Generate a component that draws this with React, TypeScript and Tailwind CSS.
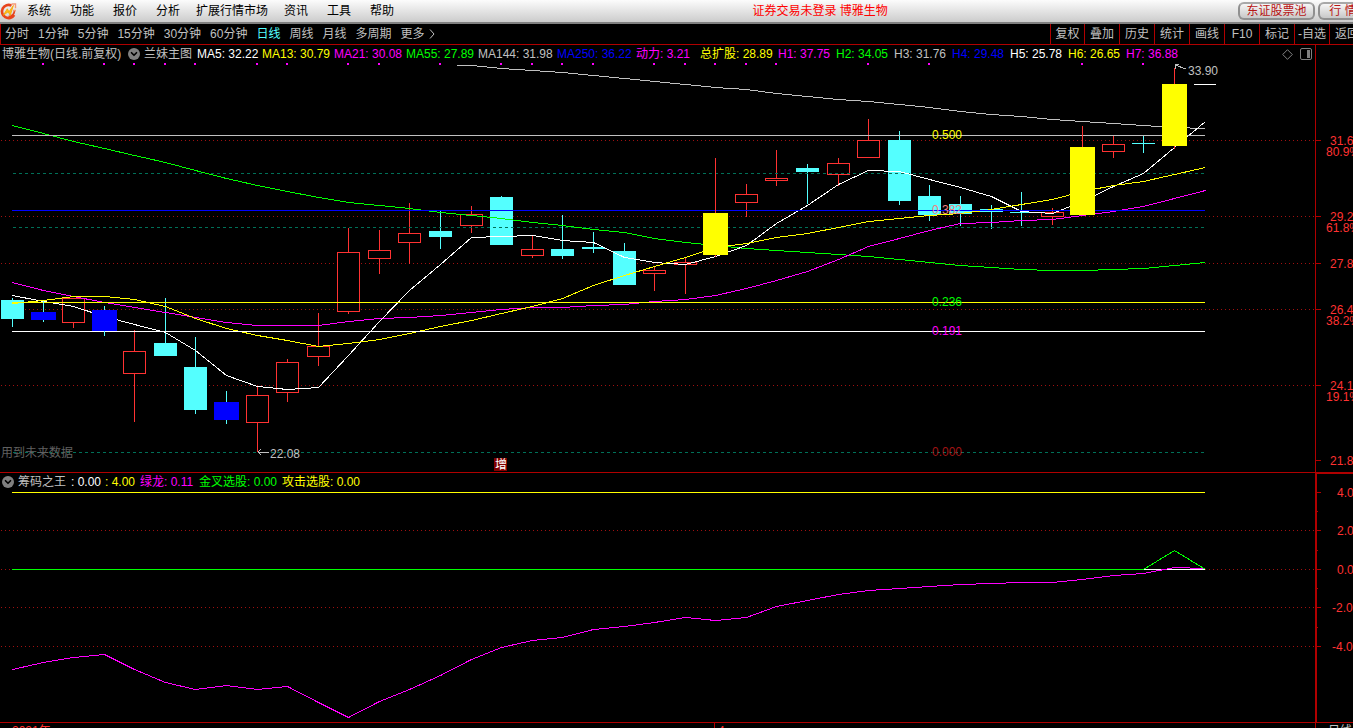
import { ChevronDown } from "lucide-react";

const STEP = 30.58;
const xAt = (i: number) => Math.floor(12.44 + i * STEP);

type Kind = "up" | "down" | "blue" | "yellow";

// high, body top, body bottom, low
const candles: [Kind, number, number, number, number][] = [
  ["down", 298, 300, 319, 327],
  ["blue", 301, 312, 320, 322],
  ["up", 298, 298, 323, 328],
  ["blue", 306, 310, 331, 336],
  ["up", 330, 351, 374, 422],
  ["down", 298, 343, 356, 356],
  ["down", 337, 367, 410, 414],
  ["blue", 391, 402, 420, 424],
  ["up", 386, 395, 423, 452],
  ["up", 359, 362, 393, 402],
  ["up", 313, 346, 357, 366],
  ["up", 228, 252, 312, 314],
  ["up", 230, 250, 259, 274],
  ["up", 203, 233, 243, 264],
  ["down", 211, 231, 237, 249],
  ["up", 206, 214, 226, 233],
  ["down", 196, 197, 245, 245],
  ["up", 236, 249, 256, 258],
  ["down", 215, 249, 256, 259],
  ["down", 232, 247, 249, 253],
  ["down", 243, 251, 285, 285],
  ["up", 267, 270, 274, 291],
  ["up", 258, 262, 265, 294],
  ["yellow", 158, 213, 255, 257],
  ["up", 184, 194, 203, 217],
  ["up", 150, 178, 181, 186],
  ["down", 164, 168, 172, 204],
  ["up", 158, 163, 175, 186],
  ["up", 119, 140, 158, 158],
  ["down", 131, 140, 201, 205],
  ["down", 185, 196, 215, 221],
  ["down", 196, 204, 214, 226],
  ["down", 205, 209, 212, 229],
  ["down", 192, 212, 213, 226],
  ["up", 208, 212, 217, 225],
  ["yellow", 126, 147, 215, 215],
  ["up", 136, 144, 152, 158],
  ["down", 136, 143, 144, 153],
  ["yellow", 68, 84, 146, 149],
];

const ma5 = [295, 301, 306, 316, 324, 332, 350, 375, 386, 389, 387, 355, 321, 290, 264, 237, 236, 235, 240, 242, 257, 262, 264, 256, 245, 223, 205, 184, 170, 171, 179, 187, 196, 211, 213, 201, 186, 173, 147, 121];
const ma13 = [303, 300, 296, 296, 299, 306, 318, 328, 335, 340, 346, 343, 339, 333, 326, 320, 313, 306, 298, 285, 275, 266, 257, 247, 243, 237, 233, 227, 221, 218, 215, 213, 209, 204, 199, 191, 185, 181, 174, 167];
const ma21 = [282, 290, 296, 302, 307, 312, 317, 322, 325, 325, 325, 321, 318, 317, 315, 312, 309, 307, 307, 305, 304, 301, 299, 295, 288, 280, 271, 259, 246, 238, 230, 223, 222, 220, 219, 215, 211, 206, 198, 190];
const ma55 = [125, 133, 141, 148, 155, 162, 170, 178, 185, 191, 197, 202, 205, 208, 212, 215, 218, 222, 225, 229, 232, 238, 242, 245, 248, 250, 252, 254, 256, 259, 262, 265, 267, 269, 270, 270, 269, 268, 265, 262];
const ma144 = [65, 68, 70, 72, 75, 78, 81, 84, 87, 89, 93, 96, 99, 101, 104, 107, 111, 114, 116, 119, 121, 123, 125, 127, 128];
const power = [669, 662, 657, 654, 669, 682, 689, 685, 689, 686, 702, 717, 701, 689, 675, 659, 647, 640, 637, 629, 626, 622, 617, 620, 617, 606, 600, 594, 590, 588, 586, 584, 583, 582, 582, 579, 575, 573, 567, 568];

const dots = [1, 3, 4, 5, 6, 8, 9, 11, 12, 14, 16, 17, 18, 19, 21, 22, 23, 24, 25, 28, 30, 35, 37];

const menu = ["系统", "功能", "报价", "分析", "扩展行情市场", "资讯", "工具", "帮助"];
const periods = ["分时", "1分钟", "5分钟", "15分钟", "30分钟", "60分钟", "日线", "周线", "月线", "多周期"];
const tools = ["复权", "叠加", "历史", "统计", "画线", "F10", "标记", "-自选", "返回"];

const legend = [
  { text: "MA5: 32.22", cls: "w-[65px] text-white" },
  { text: "MA13: 30.79", cls: "w-[72px] text-[#ffff00]" },
  { text: "MA21: 30.08", cls: "w-[72px] text-[#ff00ff]" },
  { text: "MA55: 27.89", cls: "w-[72px] text-[#00ff00]" },
  { text: "MA144: 31.98", cls: "w-[79px] text-[#c0c0c0]" },
  { text: "MA250: 36.22", cls: "w-[79px] text-[#0000ff]" },
  { text: "动力: 3.21", cls: "w-[64px] text-[#ff00ff]" },
  { text: "总扩股: 28.89", cls: "w-[78px] text-[#ffff00]" },
  { text: "H1: 37.75", cls: "w-[58px] text-[#ff00ff]" },
  { text: "H2: 34.05", cls: "w-[58px] text-[#00ff00]" },
  { text: "H3: 31.76", cls: "w-[58px] text-[#c0c0c0]" },
  { text: "H4: 29.48", cls: "w-[58px] text-[#0000ff]" },
  { text: "H5: 25.78", cls: "w-[58px] text-white" },
  { text: "H6: 26.65", cls: "w-[58px] text-[#ffff00]" },
  { text: "H7: 36.88", cls: "w-[58px] text-[#ff00ff]" },
];

const levels = [
  { y: 135, color: "#c0c0c0" },
  { y: 210, color: "#0000ff" },
  { y: 302, color: "#ffff00" },
  { y: 331, color: "#ffffff" },
];

function Logo() {
  return (
    <svg viewBox="0 0 18 18" className="h-[18px] w-[18px] shrink-0">
      <path d="M11.5 3.6A6.6 6.6 0 1 0 14.2 13" fill="none" stroke="#e8441c" strokeWidth="2.6" />
      <path d="M8.5 14.6c3.6-.4 5.6-2.6 6-5.6" fill="none" stroke="#e8441c" strokeWidth="1.8" />
      <path d="M11.5 2h4v4.3M16 8.5h-3" fill="none" stroke="#f49a7a" strokeWidth="1.4" />
      <path d="M3.4 13.2 7.3 6.8 9 9.8 13.4 3.4 10.2 13.4 8.2 9.8z" fill="#ffc21a" stroke="#f5a300" strokeWidth=".8" />
    </svg>
  );
}

function Toggle({ label }: { label: string }) {
  return (
    <button aria-label={label} className="flex h-3 w-3 shrink-0 items-center justify-center rounded-full bg-[#808080] text-black">
      <ChevronDown className="h-2.5 w-2.5" strokeWidth={4} />
    </button>
  );
}

function Polyline({ data, color, from = 0 }: { data: number[]; color: string; from?: number }) {
  const points = data.map((y, i) => `${xAt(i + from)},${y}`).join(" ");
  return <polyline points={points} fill="none" stroke={color} />;
}

function Candle({ index, candle }: { index: number; candle: (typeof candles)[number] }) {
  const [kind, high, top, bottom, low] = candle;
  const x = xAt(index);
  const wick = kind === "up" || kind === "yellow" ? "#ff3232" : "#54ffff";
  const height = bottom - top;
  return (
    <g>
      <rect x={x} y={high} width={1} height={low - high} fill={wick} />
      {kind === "up" && (
        <>
          <rect x={x - 11} y={top} width={23} height={height} fill="#ff3232" />
          <rect x={x - 10} y={top + 1} width={21} height={height - 2} fill="#000" />
        </>
      )}
      {kind === "down" && <rect x={x - 11} y={top} width={23} height={height} fill="#54ffff" />}
      {kind === "blue" && <rect x={x - 12} y={top} width={25} height={height} fill="#0000ff" />}
      {kind === "yellow" && <rect x={x - 12} y={top} width={25} height={height} fill="#ffff00" />}
    </g>
  );
}

function GridLines({ rows }: { rows: number[] }) {
  return (
    <g transform="translate(0 .5)">
      {rows.map((y) => (
        <line key={y} x1={1} x2="100%" y1={y} y2={y} stroke="#a01010" strokeDasharray="1 3" />
      ))}
    </g>
  );
}

function PriceChart() {
  const special = (k: Kind) => k === "blue" || k === "yellow";
  return (
    <svg className="block h-[409px] w-full text-xs" shapeRendering="crispEdges">
      <g transform="translate(0 -63)">
        <GridLines rows={[140, 216, 263, 309, 385]} />
        {dots.map((i) => (
          <rect key={i} x={xAt(i) - 1} y={63} width={2} height={2} fill="#ff00ff" />
        ))}
        {candles.map((c, i) => !special(c[0]) && <Candle key={i} index={i} candle={c} />)}
        <g transform="translate(.5 .5)">
          {[173, 227, 452].map((y) => (
            <line key={y} x1={12} x2={1204} y1={y} y2={y} stroke="#007058" strokeDasharray="3 3" />
          ))}
          <line x1={456} x2={472} y1={65} y2={65} stroke="#c0c0c0" />
          <Polyline data={ma144} color="#c0c0c0" from={15} />
          <Polyline data={ma55} color="#00ff00" />
          <Polyline data={ma21} color="#ff00ff" />
          <Polyline data={ma5} color="#ffffff" />
          <Polyline data={ma13} color="#ffff00" />
        </g>
        {levels.map((l) => (
          <rect key={l.y} x={12} y={l.y} width={1193} height={1} fill={l.color} />
        ))}
        {candles.map((c, i) => special(c[0]) && <Candle key={i} index={i} candle={c} />)}
        <rect x={1194} y={84} width={22} height={1} fill="#fff" />

        <text x={932} y={139} fill="#ffff00">0.500</text>
        <text x={932} y={214} fill="#f08080">0.382</text>
        <text x={932} y={306} fill="#00ff00">0.236</text>
        <text x={932} y={335} fill="#ff00ff">0.191</text>
        <text x={932} y={456} fill="#a01414">0.000</text>

        <path d="M1186 69l-11-4m4-1h-4v5" fill="none" stroke="#c0c0c0" />
        <text x={1188} y={75} fill="#c0c0c0">33.90</text>
        <path d="M269 452h-11m3-3l-3 3 3 3" fill="none" stroke="#c0c0c0" />
        <text x={270} y={458} fill="#c0c0c0">22.08</text>
        <text x={1} y={457} fill="#606060">用到未来数据</text>
        <rect x={494} y={458} width={13} height={13} fill="#800000" />
        <text x={495} y={469} fill="#fff">增</text>
      </g>
    </svg>
  );
}

function PriceAxis() {
  const labels = [
    { y: 140, price: "31.6", pct: "80.9%" },
    { y: 216, price: "29.2", pct: "61.8%" },
    { y: 263, price: "27.8" },
    { y: 309, price: "26.4", pct: "38.2%" },
    { y: 385, price: "24.1", pct: "19.1%" },
    { y: 460, price: "21.8" },
  ];
  return (
    <div className="w-[38px] shrink-0 overflow-hidden border-l border-[#b00000]">
      <svg className="block h-full w-full text-xs" fill="#ff3232">
        <g transform="translate(0 -45)">
          {labels.map((l) => (
            <g key={l.y}>
              <rect y={l.y} width={5} height={1} fill="#b00000" />
              <text x={14} y={l.y + 5}>{l.price}</text>
              {l.pct && <text x={10} y={l.y + 16}>{l.pct}</text>}
            </g>
          ))}
        </g>
      </svg>
    </div>
  );
}

function IndicatorChart() {
  return (
    <svg className="block h-[231px] w-full" shapeRendering="crispEdges">
      <g transform="translate(0 -491)">
        <GridLines rows={[530, 569, 607, 646]} />
        <rect x={12} y={492} width={1193} height={1} fill="#ffff00" />
        <rect x={1144} y={569} width={61} height={1} fill="#fff" />
        <rect x={12} y={569} width={1132} height={1} fill="#00ff00" />
        <g transform="translate(.5 .5)">
          <Polyline data={power} color="#ff00ff" />
          <Polyline data={[569, 550, 569]} color="#00ff00" from={37} />
        </g>
      </g>
    </svg>
  );
}

function IndicatorAxis() {
  const labels = [
    { y: 492, text: "4.0", x: 20 },
    { y: 530, text: "2.0", x: 20 },
    { y: 569, text: "0.0", x: 20 },
    { y: 607, text: "-2.0", x: 15 },
    { y: 646, text: "-4.0", x: 15 },
  ];
  return (
    <div className="w-[38px] shrink-0 overflow-hidden border-y border-l-2 border-[#b00000]">
      <svg className="block h-full w-full text-xs" fill="#ff3232">
        <g transform="translate(0 -474)">
          {labels.map((l) => (
            <g key={l.y}>
              <rect y={l.y} width={4} height={1} fill="#b00000" />
              <text x={l.x} y={l.y + 5}>{l.text}</text>
            </g>
          ))}
          {[511, 550, 588, 627].map((y) => (
            <rect key={y} y={y} width={1} height={1} fill="#b00000" />
          ))}
        </g>
      </svg>
    </div>
  );
}

export default function App() {
  return (
    <div className="flex h-screen flex-col overflow-hidden bg-black font-['Liberation_Sans','Noto_Sans_CJK_SC',sans-serif] text-xs whitespace-nowrap text-[#c0c0c0]">
      <header className="flex h-6 shrink-0 items-center border-b-2 border-[#808080] bg-linear-to-b from-[#fcfcfc] to-[#cccccc] text-black">
        <Logo />
        <nav className="ml-[9px] flex gap-[19px]">
          {menu.map((m) => (
            <button key={m} className={m.length > 2 ? "-mx-[3px]" : ""}>
              {m}
            </button>
          ))}
        </nav>
        <div className="flex-1 pl-2 text-center text-[#ff0000]">证券交易未登录 博雅生物</div>
        <div className="flex w-[115px] shrink-0 gap-[3px] overflow-hidden text-[#b81414]">
          <button className="h-[18px] w-[77px] shrink-0 rounded-md border-2 border-[#909090] border-t-[#a8a8a8] bg-linear-to-b from-[#f6f6f6] to-[#c8c8c8] leading-3">
            东证股票池
          </button>
          <button className="h-[18px] w-[50px] shrink-0 rounded-md border-2 border-[#909090] border-t-[#a8a8a8] bg-linear-to-b from-[#f6f6f6] to-[#c8c8c8] leading-3">
            行 情
          </button>
        </div>
      </header>

      <div className="flex h-[21px] shrink-0 border-b border-l border-[#b00000]">
        <nav className="flex min-w-0 flex-1 items-center gap-[9px] overflow-hidden pl-1">
          {periods.map((p) => (
            <button key={p} className={p === "日线" ? "text-[#54ffff]" : ""}>
              {p}
            </button>
          ))}
          <button className="flex items-center gap-1">
            更多
            <svg viewBox="0 0 6 10" className="h-2.5 w-1.5" fill="none" stroke="currentColor">
              <path d="M1 .5 5 5 1 9.5" />
            </svg>
          </button>
        </nav>
        <div className="flex w-[303px] shrink-0 overflow-hidden">
          {tools.map((t) => (
            <button key={t} className="w-[35px] shrink-0 border-l border-[#b00000] text-center first:w-[34px]">
              {t}
            </button>
          ))}
        </div>
      </div>

      <section className="flex shrink-0 border-b border-[#b00000]">
        <div className="min-w-0 flex-1">
          <div className="flex h-[18px] items-center overflow-hidden pl-0.5">
            <span className="w-[126px] shrink-0">博雅生物(日线.前复权)</span>
            <Toggle label="主图指标" />
            <span className="ml-1 w-[53px] shrink-0">兰妹主图</span>
            {legend.map((l) => (
              <span key={l.text} className={`shrink-0 ${l.cls}`}>
                {l.text}
              </span>
            ))}
            <div className="ml-auto flex items-center gap-[7px] pr-[3px] text-[#808080]">
              <svg viewBox="0 0 11 11" className="h-[11px] w-[11px]" fill="none" stroke="currentColor">
                <path d="M5.5.7 10.3 5.5 5.5 10.3.7 5.5z" />
              </svg>
              <svg viewBox="0 0 12 12" className="h-3 w-3" fill="none" stroke="currentColor">
                <rect x=".5" y=".5" width="11" height="11" rx="1.5" />
                <rect x="7" y="2" width="3" height="8" fill="currentColor" stroke="none" />
              </svg>
            </div>
          </div>
          <PriceChart />
        </div>
        <PriceAxis />
      </section>

      <section className="flex shrink-0">
        <div className="min-w-0 flex-1 border-b border-[#b00000]">
          <div className="flex h-[18px] items-center overflow-hidden pl-0.5">
            <Toggle label="副图指标" />
            <span className="ml-1 w-[53px] shrink-0">筹码之王</span>
            <span className="w-[34px] shrink-0 text-white">: 0.00</span>
            <span className="w-[35px] shrink-0 text-[#ffff00]">: 4.00</span>
            <span className="w-[59px] shrink-0 text-[#ff00ff]">绿龙: 0.11</span>
            <span className="w-[83px] shrink-0 text-[#00ff00]">金叉选股: 0.00</span>
            <span className="shrink-0 text-[#ffff00]">攻击选股: 0.00</span>
          </div>
          <IndicatorChart />
        </div>
        <IndicatorAxis />
      </section>

      <footer className="flex shrink-0 leading-4 text-[#ff3232]">
        <div className="w-[714px] shrink-0 pl-3">2021年</div>
        <div className="min-w-0 flex-1 border-l border-[#b00000] pl-[3px]">4</div>
        <div className="w-[38px] shrink-0 border-l border-[#b00000] pl-3 text-[#c0c0c0]">日线</div>
      </footer>
    </div>
  );
}
